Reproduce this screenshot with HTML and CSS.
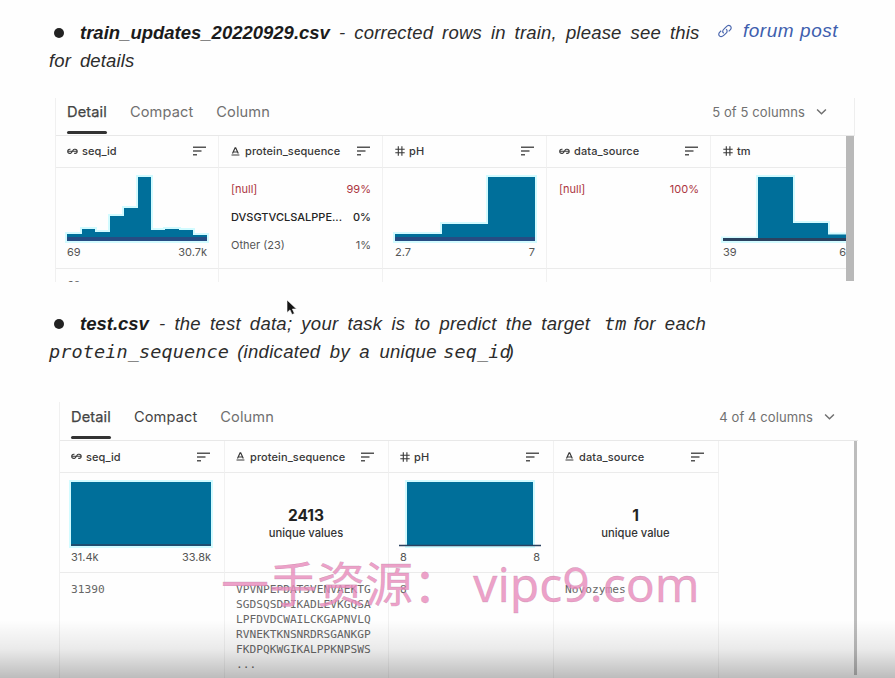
FILE: index.html
```html
<!DOCTYPE html>
<html lang="en">
<head>
<meta charset="utf-8">
<title>Dataset description</title>
<link rel="stylesheet" href="styles.css">
</head>
<body>
<svg class="defs" width="0" height="0" aria-hidden="true">
  <symbol id="sort" viewBox="0 0 14 10"><path d="M0 1.3h13M0 5h8.5M0 8.7h4" fill="none" stroke="currentColor" stroke-width="1.4"/></symbol>
  <symbol id="key" viewBox="0 0 11 7"><path d="M3.5 1.2H2.8a2 2 0 0 0 0 4.2h.7C5.300 5.400 5.500 1.200 7.300 1.200h.8a2 2 0 0 1 0 4.200H7.200M1 3.300h4.200M5.800 3.300H10" fill="none" stroke="currentColor" stroke-width="1.100"/></symbol>
  <symbol id="text" viewBox="0 0 9 9"><path d="M1.500 6.500 4.100.8h.6l2.600 5.700M2.500 5h3.800M.5 8h7.900" fill="none" stroke="currentColor" stroke-width="1.200"/></symbol>
  <symbol id="hash" viewBox="0 0 10 10"><path d="M3.300.3v9.400M6.900.3v9.400M.3 3.200h9.400M.3 6.800h9.400" fill="none" stroke="currentColor" stroke-width="1.100"/></symbol>
  <symbol id="chev" viewBox="0 0 12 8"><path d="M1.200 1.200 6 6l4.800-4.800" fill="none" stroke="currentColor" stroke-width="1.600"/></symbol>
</svg>

<section class="note note-a">
  <div class="line"><i class="dot"></i><b>train_updates_20220929.csv</b><span class="t1">- corrected rows in train, please see this</span>
    <svg class="link-icon" width="16" height="16" viewBox="0 0 16 16"><path d="M6.800 10.300c-1.700-.9-1.300-3.100.1-4.200l2.300-2.300c1.200-1.200 3-1.600 4.200-.7 1.200 1 .9 2.700-.2 3.800L11.700 8.400M9 6.200c1.700.9 1.300 3.100-.1 4.200l-2.200 2c-1.300 1.200-3.200 1.500-4.300.5-1.100-1-.7-2.700.4-3.800l1.400-1.300" fill="none" stroke="currentColor" stroke-width="1.200"/></svg>
    <a class="forum">forum post</a></div>
  <div class="line"><span class="t2">for details</span></div>
</section>

<section class="panel panel-a">
  <header class="tabs"><span class="tab on">Detail</span><span class="tab">Compact</span><span class="tab">Column</span><span class="count">5 of 5 columns</span><svg class="chev"><use href="#chev"/></svg></header>
  <div class="view">
    <div class="grid">
      <div class="th"><svg class="key"><use href="#key"/></svg>seq_id<svg class="sort"><use href="#sort"/></svg></div>
      <div class="th"><svg class="txt"><use href="#text"/></svg>protein_sequence<svg class="sort"><use href="#sort"/></svg></div>
      <div class="th"><svg class="hash"><use href="#hash"/></svg>pH<svg class="sort"><use href="#sort"/></svg></div>
      <div class="th"><svg class="key"><use href="#key"/></svg>data_source<svg class="sort"><use href="#sort"/></svg></div>
      <div class="th"><svg class="hash"><use href="#hash"/></svg>tm</div>

      <div class="sum"><svg class="chart" viewBox="0 0 140 64"><path class="bars" d="M0 64V57H15V52H28V55H43V39H57V31H71V0H84V53H98V52H112V53H126V58H140V64Z"/><path class="base" d="M0 62H140"/></svg><div class="range"><span>69</span><span>30.7k</span></div></div>
      <div class="sum list"><div class="red"><span>[null]</span><span>99%</span></div><div class="strong"><span>DVSGTVCLSALPPE...</span><span>0%</span></div><div><span>Other (23)</span><span>1%</span></div></div>
      <div class="sum"><svg class="chart" viewBox="0 0 140 64"><path class="bars" d="M0 64V57H47V47H93V0H140V64Z"/><path class="base" d="M0 62H140"/></svg><div class="range"><span>2.7</span><span>7</span></div></div>
      <div class="sum list"><div class="red"><span>[null]</span><span>100%</span></div></div>
      <div class="sum"><svg class="chart" viewBox="0 0 140 64"><path class="bars" d="M0 64V61.500H35V0H70V46H105V57.500H140V64Z"/><path class="base" d="M0 62.500H140"/></svg><div class="range"><span>39</span><span>68.4</span></div></div>

      <div class="td">69</div><div class="td"></div><div class="td"></div><div class="td"></div><div class="td"></div>
    </div>
    <div class="scroll"></div>
  </div>
</section>

<section class="note note-b">
  <div class="line"><i class="dot"></i><b>test.csv</b><span class="t3">- the test data; your task is to predict the target</span><code class="tm">tm</code><span class="t4">for each</span></div>
  <div class="line"><code>protein_sequence</code><span class="t5">(indicated by a unique</span><code class="sid">seq_id</code><span class="paren">)</span></div>
</section>

<section class="panel panel-b">
  <header class="tabs"><span class="tab on">Detail</span><span class="tab dark">Compact</span><span class="tab">Column</span><span class="count">4 of 4 columns</span><svg class="chev"><use href="#chev"/></svg></header>
  <div class="view">
    <div class="grid">
      <div class="th"><svg class="key"><use href="#key"/></svg>seq_id<svg class="sort"><use href="#sort"/></svg></div>
      <div class="th"><svg class="txt"><use href="#text"/></svg>protein_sequence<svg class="sort"><use href="#sort"/></svg></div>
      <div class="th"><svg class="hash"><use href="#hash"/></svg>pH<svg class="sort"><use href="#sort"/></svg></div>
      <div class="th"><svg class="txt"><use href="#text"/></svg>data_source<svg class="sort"><use href="#sort"/></svg></div>

      <div class="sum"><svg class="chart" viewBox="0 0 140 64"><path class="bars" d="M0 64V0H140V64Z"/><path class="base thin" d="M0 63H140"/></svg><div class="range"><span>31.4k</span><span>33.8k</span></div></div>
      <div class="sum uniq"><strong>2413</strong><span>unique values</span></div>
      <div class="sum"><svg class="chart" viewBox="0 0 140 64"><path class="bars" d="M7 64V0H133V64Z"/><path class="base thin" d="M-1 63.500H141"/></svg><div class="range"><span>8</span><span>8</span></div></div>
      <div class="sum uniq"><strong>1</strong><span>unique value</span></div>

      <div class="td">31390</div>
      <div class="td">VPVNPEPDATSVENVAEKTG<br>SGDSQSDPIKADLEVKGQSA<br>LPFDVDCWAILCKGAPNVLQ<br>RVNEKTKNSNRDRSGANKGP<br>FKDPQKWGIKALPPKNPSWS<br>...</div>
      <div class="td">8</div>
      <div class="td">Novozymes</div>
    </div>
    <div class="scroll"></div>
  </div>
</section>

<svg class="cursor" width="12" height="17" viewBox="0 0 12 17"><path d="M1 1v12.500l3-2.600 2 4.600 2.400-1-2-4.500H10.500Z" fill="#151515" stroke="#fff" stroke-width=".6"/></svg>
<div class="mark"><span>一手资源：</span><span>vipc9.com</span></div>
<div class="shade"></div>
</body>
</html>
```
FILE: styles.css
```css
* { box-sizing: border-box; }
body {
  margin: 0;
  height: 678px;
  overflow: hidden;
  position: relative;
  background: #fefefe;
  font-family: Inter, "Liberation Sans", sans-serif;
  color: #333;
}
.defs { position: absolute; }
svg { flex: none; overflow: visible; }

.note {
  height: 56px;
  margin-left: 49px;
  font: italic 18.5px/28px "Liberation Sans", sans-serif;
  color: #2c2c2c;
}
.note-a { margin-top: 19px; }
.note-b { margin-top: 28px; }
.line { display: flex; height: 28px; white-space: nowrap; }
.line b { color: #1b1b1b; }
.dot { width: 10px; height: 10px; margin: 9px 16px 0 5px; border-radius: 50%; background: #222; }
.t1 { margin-left: 9px; width: 378px; letter-spacing: .2px; word-spacing: 3.6px; }
.t2 { letter-spacing: .15px; word-spacing: 3.6px; }
.link-icon { margin-top: 4px; color: #4b67ae; }
.forum { margin: -2px 0 0 10px; font-size: 19px; letter-spacing: .55px; color: #3f5fae; }
.t3 { margin-left: 10px; width: 445px; letter-spacing: .25px; word-spacing: 3.7px; }
.t4 { margin-left: 7px; letter-spacing: .25px; word-spacing: 3.7px; }
.t5 { margin-left: 8px; width: 206px; letter-spacing: .3px; word-spacing: 4px; }
code { font: italic 18.5px/28px "DejaVu Sans Mono", monospace; letter-spacing: .12px; }
.paren { margin-left: -3px; }

.panel { border-left: 1px solid #f0f0f0; }
.panel-a { width: 800px; height: 184px; margin: 23px 0 0 55px; }
.panel-b { width: 799px; height: 276px; margin: 36px 0 0 59px; }
.tabs {
  display: flex;
  align-items: center;
  height: 38px;
  padding-left: 11px;
  border-bottom: 1px solid #e8e8e8;
  font-size: 14.6px;
  color: #707070;
}
.panel-a .tabs { height: 38px; padding-bottom: 10px; border-right: 1px solid #eee; }
.panel-b .tabs { height: 39px; padding-bottom: 9px; }
.tab { position: relative; margin-right: 23px; letter-spacing: .12px; }
.tab.on { color: #444; -webkit-text-stroke: .25px #444; }
.tab.dark { color: #444; }
.tab.on::after {
  content: "";
  position: absolute;
  left: 0;
  right: 0;
  bottom: -13px;
  height: 3px;
  border-radius: 2px;
  background: #333;
}
.count { margin-left: auto; font-size: 13px; letter-spacing: .1px; }
.chev { width: 11px; height: 8px; margin: 0 27px 0 11px; }
.panel-b .chev { margin-right: 23px; }

.view { display: flex; overflow: hidden; }
.panel-a .view { height: 146px; }
.panel-b .view { height: 237px; }
.grid { display: grid; flex: 1; min-width: 0; overflow: hidden; align-content: start; }
.panel-a .grid { grid-template-columns: 163px repeat(4, 164px); grid-template-rows: 32px 101px 40px; }
.panel-b .grid { grid-template-columns: 165px 164px 165px 165px; grid-template-rows: 32px 100px 110px; }
.th, .sum, .td { border-right: 1px solid #f1f1f1; border-bottom: 1px solid #ebebeb; padding: 0 10px 0 12px; overflow: hidden; }
.panel-a :is(.th, .sum, .td):nth-child(5n+1),
.panel-b :is(.th, .sum, .td) { padding-left: 11px; }
.th { display: flex; align-items: center; font-size: 11px; font-weight: 500; color: #383838; letter-spacing: .1px; }
.panel-a .th { padding-bottom: 1px; }
.th .key { width: 11px; height: 7px; margin-right: 4px; }
.th .txt { width: 9px; height: 9px; margin-right: 5px; }
.th .hash { width: 10px; height: 10px; margin-right: 4px; }
.th .sort { width: 14px; height: 10px; margin-left: auto; margin-right: 1px; color: #555; }
.panel-b .th .sort { margin-right: 3px; }
.sum { padding-top: 9px; font-size: 11px; color: #555; }
.chart { display: block; width: 140px; height: 64px; overflow: visible; }
.bars { fill: #006f9a; stroke: #d2fbff; stroke-width: 4px; paint-order: stroke; }
.base { stroke: #264c83; stroke-width: 4px; fill: none; }
.panel-a .sum:nth-child(10) .base { stroke: #2b4260; stroke-width: 3px; }
.base.thin { stroke: #2b4260; stroke-width: 1.5px; }
.range { display: flex; justify-content: space-between; width: 140px; margin-top: 4px; line-height: 15px; }
.list { padding-top: 7px; }
.list div { display: flex; justify-content: space-between; width: 140px; height: 28px; line-height: 28px; }
.red { color: #ac3541; }
.strong { color: #242424; font-weight: 500; }
.uniq { display: flex; flex-direction: column; align-items: center; padding: 33px 12px 0 11px; font-weight: 500; color: #333; }
.uniq strong { font-size: 15.5px; line-height: 20px; font-weight: 700; color: #222; }
.uniq span { font-size: 11.2px; line-height: 15px; }
.td { font: 11.2px/15px "DejaVu Sans Mono", monospace; color: #666; padding-top: 9px; border-bottom: 0; }
.scroll { flex: none; background: #b9b9b9; }
.panel-a .scroll { width: 8px; margin: 0 1px 1px 0; }
.panel-b .scroll { width: 3px; background: #bdbdbd; margin: 0 1px 3px 0; }

.cursor { position: absolute; left: 286px; top: 299px; }
.mark {
  position: absolute;
  left: 221px;
  top: 549px;
  display: flex;
  gap: 12px;
  font: 48px/70px "Noto Sans", "Noto Sans CJK SC", sans-serif;
  color: rgba(233, 140, 188, .82);
  -webkit-text-stroke: .3px rgba(165, 120, 150, .5);
  white-space: nowrap;
}
.shade {
  position: absolute;
  left: 0;
  right: 0;
  bottom: 0;
  height: 58px;
  background: linear-gradient(rgba(0,0,0,0), rgba(0,0,0,.08) 50%, rgba(0,0,0,.26));
}
```
